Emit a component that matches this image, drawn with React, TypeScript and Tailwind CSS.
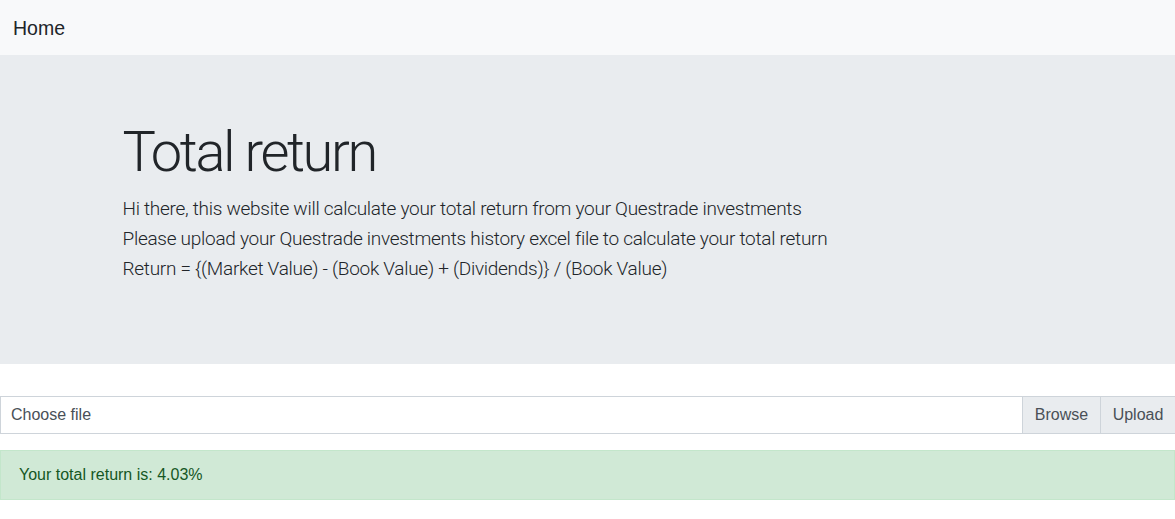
export default function App() {
  return (
    <div className="min-h-[519px] bg-white text-[#212529]" style={{ fontFamily: '"Liberation Sans", Arial, sans-serif' }}>
      <nav className="h-[55px] bg-[#f8f9fa] flex items-center px-[13px]">
        <span className="text-[19.5px] leading-[30px] text-[#212529]">Home</span>
      </nav>
      <div className="bg-[#e9ecef] py-[64px] mb-[32px]">
        <div className="w-[960px] mx-auto px-[15px]" style={{ fontFamily: 'Roboto, "Noto Sans", sans-serif' }}>
          <h1 className="text-[56px] font-light leading-[67px] mb-[8px] tracking-[-2.4px]">Total return</h1>
          <p className="text-[19px] font-light leading-[30px] mb-[16px] tracking-[-0.28px]">
            Hi there, this website will calculate your total return from your Questrade investments
            <br />
            Please upload your Questrade investments history excel file to calculate your total return
            <br />
            Return = {"{"}(Market Value) - (Book Value) + (Dividends){"}"} / (Book Value)
          </p>
        </div>
      </div>
      <div className="flex h-[38px] border-y border-l border-[#ced4da] text-[16px] text-[#495057]">
        <div className="flex-1 flex items-center px-[10px]">Choose file</div>
        <div className="flex items-center w-[78px] justify-center bg-[#e9ecef] border-l border-[#ced4da]">Browse</div>
        <div className="flex items-center w-[75px] justify-center bg-[#e9ecef] border-l border-[#ced4da]">Upload</div>
      </div>
      <div className="mt-[16px] h-[50px] flex items-center px-[18px] bg-[#d0e9d6] border border-[#c3e6cb] text-[#155724] text-[16px]">
        Your total return is: 4.03%
      </div>
    </div>
  );
}
